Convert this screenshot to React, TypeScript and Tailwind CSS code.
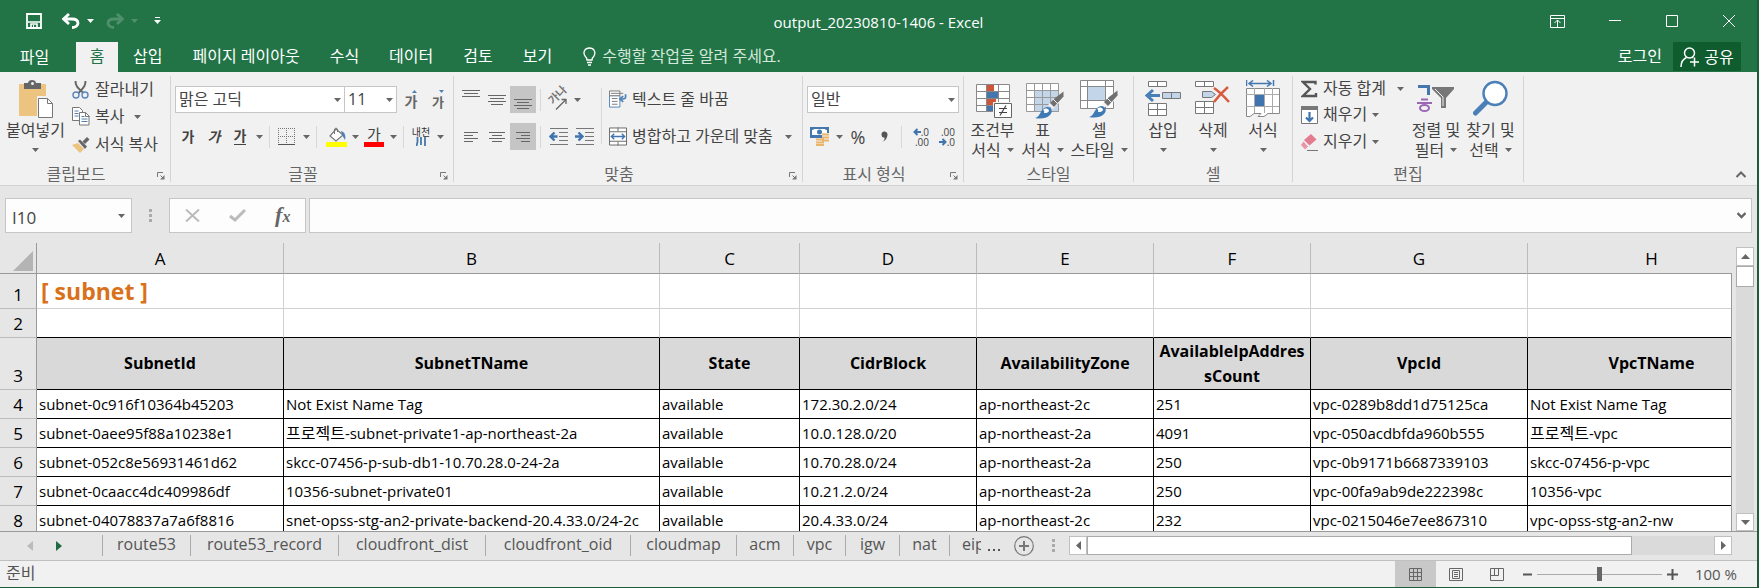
import type { ReactNode } from "react";

const Caret = ({ light = false }: { light?: boolean }) => (
  <svg width="7" height="4" viewBox="0 0 7 4" className={light ? "fill-white" : "fill-[#666]"}>
    <path d="M0 0h7L3.500 4z" />
  </svg>
);

const CaretButton = ({ label }: { label: string }) => (
  <button aria-label={label} className="flex h-full w-3 shrink-0 items-center justify-center">
    <Caret />
  </button>
);

const Tool = ({ label, active = false, children }: { label: string; active?: boolean; children: ReactNode }) => (
  <button
    aria-label={label}
    className={
      active
        ? "flex h-full w-[26px] shrink-0 items-center justify-center bg-[#c5c5c5]"
        : "flex h-full w-[26px] shrink-0 items-center justify-center"
    }
  >
    {children}
  </button>
);

const Sep = () => <div className="mx-1 h-[22px] w-px shrink-0 bg-[#d8d8d8]" />;

const ToolRow = ({ children }: { children: ReactNode }) => <div className="flex h-[27px] items-center">{children}</div>;

const Launcher = () => (
  <svg width="8" height="8" viewBox="0 0 8 8" fill="none" stroke="#777">
    <path d="M.5 5V.5H6M3.500 3.500l3 3" />
    <path d="M7.500 3v4.500H3z" fill="#777" stroke="none" />
  </svg>
);

const Group = ({
  label,
  launcher = false,
  className,
  children,
}: {
  label: string;
  launcher?: boolean;
  className: string;
  children: ReactNode;
}) => (
  <section aria-label={label} className={`mt-1 flex h-[106px] shrink-0 flex-col border-r border-[#d4d4d4] ${className}`}>
    <div className="flex min-h-0 flex-1">{children}</div>
    <div className="flex h-4 items-center leading-4 text-[#666]">
      <span className="flex-1 text-center">{label}</span>
      {launcher && (
        <button aria-label={`${label} 설정`} className="flex w-[18px] justify-center pt-1">
          <Launcher />
        </button>
      )}
    </div>
  </section>
);

const BigButton = ({
  icon,
  line1,
  line2,
  className,
}: {
  icon: ReactNode;
  line1: string;
  line2?: string;
  className: string;
}) => (
  <button className={`flex shrink-0 flex-col items-center pt-1 leading-5 whitespace-nowrap ${className}`}>
    <span className="flex h-10 items-start justify-center">{icon}</span>
    <span>{line1}</span>
    <span className="flex h-5 items-center gap-[6px]">
      {line2}
      <Caret />
    </span>
  </button>
);

const Lines = ({ rows }: { rows: [number, number, number][] }) => (
  <svg width="20" height="20" viewBox="0 0 20 20" stroke="#666">
    {rows.map(([x1, x2, y], i) => (
      <path key={i} d={`M${x1} ${y}.5H${x2}`} />
    ))}
  </svg>
);

const Combo = ({ label, value, className }: { label: string; value: string; className: string }) => (
  <div className={`relative h-[27px] shrink-0 ${className}`}>
    <select
      aria-label={label}
      defaultValue={value}
      className="h-full w-full appearance-none border border-[#c6c6c6] bg-white pb-[2px] pl-[3px] text-[#444]"
    >
      <option>{value}</option>
    </select>
    <span className="pointer-events-none absolute inset-y-0 right-1 flex items-center">
      <Caret />
    </span>
  </div>
);

const PasteIcon = () => (
  <svg width="36" height="40" viewBox="0 0 36 40">
    <rect x="1" y="4" width="27" height="32" rx="1" fill="#ecc47f" />
    <path d="M6 3h4c0-2 2-3 4-3s4 1 4 3h5v6H6z" fill="#666" />
    <circle cx="14.500" cy="3.500" r="1.500" fill="#f1f1f1" />
    <path d="M19 16h12l5 6v17H19z" fill="#f1f1f1" />
    <path d="M20.500 18.500h9l5 5v14h-14z" fill="#fff" stroke="#777" />
    <path d="M29.500 18.500v5h5" fill="none" stroke="#777" />
  </svg>
);

const CutIcon = () => (
  <svg width="18" height="18" viewBox="0 0 18 18" fill="none">
    <path d="M3.500 0c0 4 1 6 8 12M13.500 0c0 4-1 6-7 12" stroke="#666" strokeWidth="2" />
    <circle cx="4" cy="14" r="3" stroke="#5a86bd" strokeWidth="1.400" />
    <circle cx="13" cy="14" r="3" stroke="#5a86bd" strokeWidth="1.400" />
  </svg>
);

const CopyIcon = () => (
  <svg width="18" height="19" viewBox="0 0 18 19" fill="#fff" stroke="#777">
    <path d="M.5.5h7l3 3v10H.500z" />
    <path d="M2.500 4h4M2.500 6.500h4M2.500 9h4" stroke="#4f81b5" />
    <path d="M7.500 5.500h6l3.500 3.500v9H7.500z" />
    <path d="M13.500 5.500v4h4" fill="none" />
    <path d="M9.500 9.500h3M9.500 12h6M9.500 14.500h6" stroke="#4f81b5" />
  </svg>
);

const BrushIcon = () => (
  <svg width="18" height="16" viewBox="0 0 18 16">
    <path d="M0 8l6-2 6 6-4 4z" fill="#ecc47f" />
    <path d="M6 4l2-1.500 7 7L13 12z" fill="#666" />
    <path d="M10.500 4.500L15 0l2.500 2.500L13 7z" fill="#666" />
  </svg>
);

const GrowIcon = ({ up }: { up: boolean }) => (
  <span
    className={
      up
        ? "relative pt-1 pl-[2px] text-[14px] leading-4 font-bold text-[#666]"
        : "relative pt-1 pl-1 text-[13px] leading-4 font-bold text-[#666]"
    }
  >
    가
    <svg width="5" height="3" viewBox="0 0 5 3" fill="#4f81b5" className="absolute top-0 right-0">
      <path d={up ? "M0 3h5L2.500 0z" : "M0 0h5L2.500 3z"} />
    </svg>
  </span>
);

const BorderIcon = () => (
  <svg width="18" height="18" viewBox="0 0 18 18" fill="none" stroke="#777">
    <path d="M.5 0v16M8.500 0v16M16.500 0v16M0 .5h17M0 8.500h17" strokeDasharray="1 1" />
    <path d="M0 16.500h17" stroke="#555" />
  </svg>
);

const FillIcon = () => (
  <svg width="21" height="20" viewBox="0 0 21 20">
    <path d="M10 2l7 6-7 6-6-5z" fill="#fff" stroke="#777" strokeWidth="1.200" />
    <path d="M8.500 7V2q1.500-2 3 0v3" fill="none" stroke="#777" />
    <path d="M15 4c4 1 5 5 4 9l-3-5z" fill="#4f81b5" />
    <path d="M0 15h21v5H0z" fill="#ff0" />
  </svg>
);

const OrientationIcon = () => (
  <svg width="22" height="22" viewBox="0 0 22 22" className="overflow-visible">
    <text fontSize="11" fontWeight="bold" fill="#777" transform="translate(6 16) rotate(-45)">
      가나
    </text>
    <path d="M9 20.500L19 10.500M19 15v-4.500h-4.500" fill="none" stroke="#666" strokeWidth="1.300" />
  </svg>
);

const IndentIcon = ({ right }: { right: boolean }) => (
  <svg width="19" height="17" viewBox="0 0 19 17" fill="none" stroke="#777">
    <path d="M1 .5h18M10 4.500h9M10 8.500h9M10 12.500h9M1 16.500h18" />
    <path
      d={right ? "M0 8.500h7M3.500 4.500l4 4-4 4" : "M8.500 8.500H2M5.500 4.500l-4 4 4 4"}
      stroke="#3f74ae"
      strokeWidth="2.400"
    />
  </svg>
);

const WrapIcon = () => (
  <svg width="19" height="19" viewBox="0 0 19 19" fill="none" stroke="#4f81b5">
    <path d="M.5 5.500h11v12H.500z" fill="#fff" />
    <path d="M.5.500h11v5H.500z" fill="#fff" stroke="#777" />
    <path d="M2 3h13M3 8.500h6M3 11.500h6M3 14.500h6" stroke="#777" />
    <path d="M17.500 4v3q0 2-5 2M15 6l-3.500 3 3.500 3" strokeWidth="1.800" />
  </svg>
);

const MergeIcon = () => (
  <svg width="19" height="19" viewBox="0 0 19 19" fill="none" stroke="#666">
    <path d="M.5.500h18v18H.500zM0 4.500h19M0 14.500h19M9.500 0v4M9.500 15v4" fill="#fff" />
    <path d="M3 9.500h13M5.500 6.500l-3 3 3 3M13.500 6.500l3 3-3 3" stroke="#3f74ae" strokeWidth="1.500" />
  </svg>
);

const CurrencyIcon = () => (
  <svg width="20" height="19" viewBox="0 0 20 19">
    <path d="M0 0h19v11H0z" fill="#4477ad" />
    <path d="M2 3q2 0 2-1h11q0 1 2 1v5H2z" fill="#fff" />
    <circle cx="9.500" cy="5" r="2.500" fill="#4477ad" />
    <path d="M12 6h8v12h-8z" fill="#f1f1f1" />
    <path d="M6 11h8v8H6z" fill="#f1f1f1" />
    <path d="M12 7.500h7M12 10.500h7M12 13.500h7M6 12.500h8M6 15.500h8M6 18h8" stroke="#e9b56b" strokeWidth="2" />
  </svg>
);

const Arrow = ({ right }: { right: boolean }) => (
  <svg width="8" height="8" viewBox="0 0 8 8" fill="none" stroke="#3f74ae" strokeWidth="2">
    <path d={right ? "M0 4h6.500M3.500 1l3 3-3 3" : "M8 4H1.500M4.500 1l-3 3 3 3"} />
  </svg>
);

const DecimalIcon = ({ more }: { more: boolean }) => (
  <span className="flex w-5 flex-col text-[10px] leading-[10px] text-[#444]">
    <span className="flex items-center justify-end">
      {more && <Arrow right={false} />}
      {more ? ".0" : ".00"}
    </span>
    <span className="flex items-center justify-end">
      {!more && <Arrow right />}
      {more ? ".00" : ".0"}
    </span>
  </span>
);

const CondIcon = () => (
  <svg width="38" height="36" viewBox="0 0 38 36" className="mt-1 ml-1">
    <path d="M.5.500h33v27H.500z" fill="#fff" />
    <path d="M11 1h7v6h-7zM11 15h9v6h-9z" fill="#cf5538" />
    <path d="M11 8h11v6H11zM11 22h6v6h-6z" fill="#4477ad" />
    <path d="M.5.500h33v27H.500zM0 7.500h33M0 14.500h33M0 21.500h33M10.500 0v28M22.500 0v28" fill="none" stroke="#888" />
    <path d="M17 18h21v17H17z" fill="#f1f1f1" />
    <path d="M18.500 19.500h17v14h-17z" fill="#fff" stroke="#666" />
    <path d="M23 24.500h8M23 28.500h8M30 21.500l-6 10" stroke="#444" strokeWidth="1.200" />
  </svg>
);

const Brush = () => (
  <>
    <path d="M37 9v7L27 26l-5-4z" fill="#f1f1f1" />
    <path d="M37.500 8.500v5L28 24l-4-4 5-5z" fill="#707070" />
    <path d="M27 16l5 5" stroke="#f1f1f1" />
    <path d="M9 35c6-1 5-10 12-11 5 0 6 5 3 8-4 4-10 4-15 3z" fill="#3f7ab5" />
    <path d="M17 27c3-3 6-1 6 1-1 2-3 2-5 2 0-1 1-2-1-3z" fill="#fff" />
  </>
);

const TableStyleIcon = () => (
  <svg width="38" height="36" viewBox="0 0 38 36" className="mt-[3px] ml-1">
    <path d="M.5.500h32v28H.500z" fill="#fff" />
    <path d="M9 7h24v22H9z" fill="#c3d5e8" />
    <path
      d="M.5.500h32v28H.500zM0 7.500h33M0 14.500h33M0 21.500h33M8.500 0v28M16.500 0v28M24.500 0v28"
      fill="none"
      stroke="#999"
    />
    <Brush />
  </svg>
);

const CellStyleIcon = () => (
  <svg width="38" height="38" viewBox="0 0 38 38">
    <path d="M.5.500h33v28H.500zM0 6.500h33M0 20.500h33M7.500 0v28M25.500 0v28" fill="#fff" stroke="#888" />
    <path d="M8 7h17v13H8z" fill="#c3d5e8" />
    <g transform="translate(0 2)">
      <Brush />
    </g>
  </svg>
);

const InsertIcon = () => (
  <svg width="36" height="36" viewBox="0 0 36 36" fill="#fff" stroke="#777">
    <path d="M3.500 1.500h18v5h-18zM12.500 1.500v5M3.500 23.500h18v12h-18zM12.500 23.500v12M3.500 29.500h18" />
    <path d="M17.500 12.500h18v6h-18zM26.500 12.500v6" fill="#c3d5e8" />
    <path d="M15 15.500H2M8 10l-6 5.500L8 21" fill="none" stroke="#4a80b8" strokeWidth="3" />
  </svg>
);

const DeleteIcon = () => (
  <svg width="36" height="36" viewBox="0 0 36 36" fill="#fff" stroke="#777">
    <path d="M.5 1.500h18v5H.500zM9.500 1.500v5M.5 21.500h18v12H.500zM9.500 21.500v12M.5 27.500h18" />
    <path d="M7.500 11.500h9l4 3-4 3h-9z" fill="#c3d5e8" />
    <path d="M19 8q6 4 15 14M33 7Q26 13 19 22" fill="none" stroke="#d95b3e" strokeWidth="2.500" />
  </svg>
);

const FormatIcon = () => (
  <svg width="35" height="38" viewBox="0 0 35 38" fill="none">
    <path d="M.5 0v6M27.500 0v6M3 3.500h22M7 .500l-4 3 4 3M21 .500l4 3-4 3" stroke="#4477ad" strokeWidth="1.500" />
    <path d="M.5 8.500h33v25H22l-4 3h-6l3-3H8l-4 3H.500z" fill="#fff" stroke="#888" />
    <path d="M0 14.500h33M0 26.500h33M8.500 8v25M18.500 8v25M26.500 8v25" stroke="#aaa" />
    <path d="M9 15h9v11H9z" fill="#3f74ae" />
  </svg>
);

const SigmaIcon = () => (
  <svg width="17" height="18" viewBox="0 0 17 18" fill="none" stroke="#555" strokeWidth="2.400">
    <path d="M14.500 4.500V2H2l7 7-7 7h13v-3" />
  </svg>
);

const FillDownIcon = () => (
  <svg width="17" height="18" viewBox="0 0 17 18">
    <path d="M.5.500h16v17H.500z" fill="#fff" stroke="#777" />
    <path d="M0 0h17v4H0z" fill="#777" />
    <path d="M8.500 6v9M5 11.500l3.500 3.500 3.500-3.500" fill="none" stroke="#3f74ae" strokeWidth="2.200" />
  </svg>
);

const EraserIcon = () => (
  <svg width="17" height="17" viewBox="0 0 17 17">
    <path d="M10 0l5.500 5.500-7 6L3 6z" fill="#e37b91" />
    <path d="M2.500 7.500l4.500 5L4 15.500 0 11z" fill="#e896a8" />
    <path d="M6 16.500h11" stroke="#777" />
  </svg>
);

const SortIcon = () => (
  <svg width="38" height="30" viewBox="0 0 38 30" className="mt-1">
    <path d="M1 2.500h10.500V11" fill="none" stroke="#4477ad" strokeWidth="3" />
    <path d="M4 15.500h7M0 19h15" stroke="#9a66b5" strokeWidth="2" />
    <ellipse cx="7.500" cy="24" rx="4.500" ry="3" fill="none" stroke="#9a66b5" strokeWidth="2" />
    <path d="M15 3h22v2l-8 9v10h-5V14l-9-9z" fill="#777" />
    <path d="M18 5l8 8v9" fill="none" stroke="#f1f1f1" />
  </svg>
);

const FindIcon = () => (
  <svg width="36" height="36" viewBox="0 0 36 36">
    <path d="M2.500 33L14 21.500" stroke="#4a7fb8" strokeWidth="5" strokeLinecap="round" />
    <circle cx="22" cy="13.500" r="11.500" fill="#fff" stroke="#4a7fb8" strokeWidth="2.400" />
  </svg>
);

const MENU = ["삽입", "페이지 레이아웃", "수식", "데이터", "검토", "보기"];

const UndoPath = "M7 1L1.500 6 7 11M2 6h8q6 0 6 4.500-1 4-6 4";

const Header = () => (
  <header className="bg-[#227447] text-white">
    <div className="flex h-[42px] items-center">
      <div className="flex flex-1 items-center pl-[26px]">
        <button aria-label="저장">
          <svg width="16" height="16" viewBox="0 0 16 16" fill="none" stroke="#fff">
            <path d="M1 1h14v14H1z" strokeWidth="1.800" />
            <path d="M2 9h12M5 15v-4h6v4" strokeWidth="1.600" />
            <path d="M7.500 12v3" />
          </svg>
        </button>
        <button aria-label="실행 취소" className="ml-5">
          <svg width="18" height="16" viewBox="0 0 18 16" fill="none" stroke="#fff" strokeWidth="2.800">
            <path d={UndoPath} />
          </svg>
        </button>
        <button aria-label="실행 취소 목록" className="ml-[7px]">
          <Caret light />
        </button>
        <button aria-label="다시 실행" className="ml-3 opacity-20">
          <svg width="18" height="16" viewBox="0 0 18 16" fill="none" stroke="#fff" strokeWidth="2.800">
            <path d={UndoPath} transform="matrix(-1 0 0 1 18 0)" />
          </svg>
        </button>
        <button aria-label="다시 실행 목록" className="ml-[7px] opacity-20">
          <Caret light />
        </button>
        <button aria-label="빠른 실행 도구 모음 사용자 지정" className="ml-4">
          <svg width="7" height="8" viewBox="0 0 7 8" fill="#fff">
            <path d="M1 0h5v1H1zM0 3h7L3.500 7z" />
          </svg>
        </button>
      </div>
      <h1 className="pt-[2px] pr-[26px] text-[15px]">output_20230810-1406 - Excel</h1>
      <div className="flex flex-1 justify-end">
        <button aria-label="리본 메뉴 표시 옵션" className="flex h-10 w-[57px] items-center justify-center">
          <svg width="15" height="13" viewBox="0 0 15 13" fill="none" stroke="#fff">
            <path d="M.5.500h14v12H.500zM0 3.500h15M7.500 12V5M4.500 8l3-3 3 3" />
          </svg>
        </button>
        <button aria-label="최소화" className="flex h-10 w-[57px] items-center justify-center">
          <svg width="12" height="12" viewBox="0 0 12 12" stroke="#fff">
            <path d="M0 5.500h12" />
          </svg>
        </button>
        <button aria-label="최대화" className="flex h-10 w-[57px] items-center justify-center">
          <svg width="12" height="12" viewBox="0 0 12 12" fill="none" stroke="#fff">
            <path d="M.5.500h11v11H.500z" />
          </svg>
        </button>
        <button aria-label="닫기" className="flex h-10 w-[57px] items-center justify-center">
          <svg width="12" height="12" viewBox="0 0 12 12" stroke="#fff">
            <path d="M0 0l12 12M12 0L0 12" />
          </svg>
        </button>
      </div>
    </div>
    <nav className="flex h-[30px] items-stretch pr-4">
      <button className="w-[76px] pr-[7px]">파일</button>
      <button className="w-[42px] bg-[#f1f1f1] pb-[2px] text-[#227447]">홈</button>
      {MENU.map((m) => (
        <button key={m} className="px-[15px] pb-[2px] whitespace-nowrap">
          {m}
        </button>
      ))}
      <button className="flex items-center gap-[6px] pb-[2px] pl-4 whitespace-nowrap text-[#d3e8db]">
        <svg width="13" height="19" viewBox="0 0 13 19" fill="none" stroke="#fff" strokeWidth="1.300">
          <path d="M4 13q0-2-2-4C-.5 5 2 1 6.500 1S13 5 11 9q-2 2-2 4z" />
          <path d="M4 15.500h5M5 18h3" strokeWidth="1.600" />
        </svg>
        수행할 작업을 알려 주세요.
      </button>
      <div className="flex-1" />
      <button className="px-[11px] pb-[2px]">로그인</button>
      <button className="mb-px flex w-[68px] items-center justify-center gap-[5px] bg-[#0f5c2f]">
        <svg width="19" height="20" viewBox="0 0 19 20" fill="none" stroke="#fff" strokeWidth="1.500">
          <circle cx="9.500" cy="6" r="5" />
          <path d="M1 20q0-7 5.500-9.500M12 10l1 1M10 15h9M14.500 10.500v9" />
        </svg>
        공유
      </button>
    </nav>
  </header>
);

const SmallCommand = ({
  icon,
  label,
  caret,
  className,
}: {
  icon: ReactNode;
  label: string;
  caret?: string;
  className: string;
}) => (
  <div className={`flex items-center whitespace-nowrap ${className}`}>
    <button className="flex items-center gap-[5px]">
      <span className="flex w-[18px] justify-center">{icon}</span>
      <span className="pb-[2px]">{label}</span>
    </button>
    {caret && (
      <span className={`flex h-full ${caret}`}>
        <CaretButton label={`${label} 옵션`} />
      </span>
    )}
  </div>
);

const Ribbon = () => (
  <div className="flex h-[114px] border-b border-[#d2d2d2] bg-[#f1f1f1] text-[#444]">
    <Group label="클립보드" launcher className="w-[171px]">
      <BigButton icon={<PasteIcon />} line1="붙여넣기" className="w-[71px]" />
      <div className="pl-px">
        <SmallCommand icon={<CutIcon />} label="잘라내기" className="h-[27px]" />
        <SmallCommand icon={<CopyIcon />} label="복사" caret="pl-[7px]" className="h-[27px]" />
        <SmallCommand icon={<BrushIcon />} label="서식 복사" className="h-[29px]" />
      </div>
    </Group>

    <Group label="글꼴" launcher className="w-[283px]">
      <div className="flex flex-col gap-[10px] pt-[10px] pl-1">
        <ToolRow>
          <Combo label="글꼴" value="맑은 고딕" className="w-[170px]" />
          <Combo label="글꼴 크기" value="11" className="-ml-px w-[53px]" />
          <Tool label="글꼴 크기 크게">
            <GrowIcon up />
          </Tool>
          <Tool label="글꼴 크기 작게">
            <GrowIcon up={false} />
          </Tool>
        </ToolRow>
        <ToolRow>
          <Tool label="굵게">
            <span className="text-[14px] font-bold">가</span>
          </Tool>
          <Tool label="기울임꼴">
            <span className="text-[14px] font-bold italic">가</span>
          </Tool>
          <Tool label="밑줄">
            <span className="border-b border-[#444] text-[14px] leading-4 font-bold">가</span>
          </Tool>
          <CaretButton label="밑줄 종류" />
          <Sep />
          <Tool label="테두리">
            <BorderIcon />
          </Tool>
          <CaretButton label="테두리 종류" />
          <Sep />
          <div className="flex h-full pl-[2px]">
            <Tool label="채우기 색">
              <FillIcon />
            </Tool>
            <CaretButton label="채우기 색 선택" />
          </div>
          <Tool label="글꼴 색">
            <span className="border-b-[5px] border-[#f00] px-[3px] text-[15px] leading-4">가</span>
          </Tool>
          <CaretButton label="글꼴 색 선택" />
          <Sep />
          <Tool label="윗주">
            <span className="flex flex-col items-center text-[10px] leading-[10px] whitespace-nowrap text-[#333]">
              내천
              <svg width="10" height="9" viewBox="0 0 10 9" fill="none" stroke="#4477ad" strokeWidth="1.800">
                <path d="M1.500 0v5l-1 4M5 0v8M9 0v9" />
              </svg>
            </span>
          </Tool>
          <CaretButton label="윗주 옵션" />
        </ToolRow>
      </div>
    </Group>

    <Group label="맞춤" launcher className="w-[349px]">
      <div className="flex flex-col gap-[10px] pt-[10px] pl-1">
        <ToolRow>
          <Tool label="위쪽 맞춤">
            <Lines rows={[[1, 19, 0], [3, 17, 3], [1, 19, 6]]} />
          </Tool>
          <Tool label="가운데 맞춤(세로)">
            <Lines rows={[[1, 19, 5], [3, 17, 8], [1, 19, 11], [4, 16, 14]]} />
          </Tool>
          <Tool label="아래쪽 맞춤" active>
            <Lines rows={[[1, 19, 9], [4, 16, 12], [1, 19, 15], [4, 16, 18]]} />
          </Tool>
          <Sep />
          <Tool label="방향">
            <OrientationIcon />
          </Tool>
          <CaretButton label="방향 옵션" />
        </ToolRow>
        <ToolRow>
          <Tool label="왼쪽 맞춤">
            <Lines rows={[[3, 17, 5], [3, 12, 8], [3, 17, 11], [3, 12, 14]]} />
          </Tool>
          <Tool label="가운데 맞춤">
            <Lines rows={[[2, 18, 5], [5, 15, 8], [2, 18, 11], [5, 15, 14]]} />
          </Tool>
          <Tool label="오른쪽 맞춤" active>
            <Lines rows={[[3, 17, 5], [8, 17, 8], [3, 17, 11], [8, 17, 14]]} />
          </Tool>
          <Sep />
          <Tool label="내어쓰기">
            <IndentIcon right={false} />
          </Tool>
          <Tool label="들여쓰기">
            <IndentIcon right />
          </Tool>
        </ToolRow>
      </div>
      <div className="mx-1 mt-3 h-[56px] w-px bg-[#d8d8d8]" />
      <div className="flex flex-col gap-[10px] pt-[10px] pl-[3px]">
        <SmallCommand icon={<WrapIcon />} label="텍스트 줄 바꿈" className="h-[27px]" />
        <SmallCommand icon={<MergeIcon />} label="병합하고 가운데 맞춤" caret="pl-[10px]" className="h-[27px]" />
      </div>
    </Group>

    <Group label="표시 형식" launcher className="w-[161px]">
      <div className="flex flex-col gap-[10px] pt-[10px] pl-1">
        <Combo label="표시 형식" value="일반" className="w-[152px]" />
        <ToolRow>
          <Tool label="회계 표시 형식">
            <CurrencyIcon />
          </Tool>
          <CaretButton label="통화 선택" />
          <Tool label="백분율 스타일">
            <span className="text-[18px]">%</span>
          </Tool>
          <Tool label="쉼표 스타일">
            <svg width="7" height="11" viewBox="0 0 7 11" fill="#555">
              <path d="M1 11q3-2 2.500-4.500A3 3 0 1 1 6.500 3Q7 8 1 11z" />
            </svg>
          </Tool>
          <Sep />
          <Tool label="자릿수 늘림">
            <DecimalIcon more />
          </Tool>
          <Tool label="자릿수 줄임">
            <DecimalIcon more={false} />
          </Tool>
        </ToolRow>
      </div>
    </Group>

    <Group label="스타일" className="w-[170px]">
      <div className="flex pl-[2px]">
        <BigButton icon={<CondIcon />} line1="조건부" line2="서식" className="w-[53px]" />
        <BigButton icon={<TableStyleIcon />} line1="표" line2="서식" className="w-[47px]" />
        <BigButton icon={<CellStyleIcon />} line1="셀" line2="스타일" className="w-[66px]" />
      </div>
    </Group>

    <Group label="셀" className="w-[159px]">
      <div className="flex pl-1">
        <BigButton icon={<InsertIcon />} line1="삽입" className="w-[50px]" />
        <BigButton icon={<DeleteIcon />} line1="삭제" className="w-[50px]" />
        <BigButton icon={<FormatIcon />} line1="서식" className="w-[50px]" />
      </div>
    </Group>

    <Group label="편집" className="w-[231px]">
      <div className="w-[116px] pl-[7px]">
        <SmallCommand icon={<SigmaIcon />} label="자동 합계" caret="pl-2" className="h-[26px]" />
        <SmallCommand icon={<FillDownIcon />} label="채우기" caret="pl-[2px]" className="h-[26px]" />
        <SmallCommand icon={<EraserIcon />} label="지우기" caret="pl-[2px]" className="h-[28px]" />
      </div>
      <BigButton icon={<SortIcon />} line1="정렬 및" line2="필터" className="w-[54px]" />
      <BigButton icon={<FindIcon />} line1="찾기 및" line2="선택" className="w-[55px]" />
    </Group>

    <div className="flex flex-1 items-end justify-end pr-[11px] pb-[7px]">
      <button aria-label="리본 메뉴 축소">
        <svg width="10" height="7" viewBox="0 0 10 7" fill="none" stroke="#666" strokeWidth="2">
          <path d="M0.500 6L5 1.500 9.500 6" />
        </svg>
      </button>
    </div>
  </div>
);

const Dots = () => (
  <svg width="3" height="13" viewBox="0 0 3 13" fill="#aaa">
    <path d="M0 0h3v3H0zM0 5h3v3H0zM0 10h3v3H0z" />
  </svg>
);

const FormulaBar = () => (
  <div className="flex h-[57px] items-start pt-3 pr-[5px] pl-[5px]">
    <div className="relative h-[35px] w-[127px]">
      <input
        aria-label="이름 상자"
        defaultValue="I10"
        className="h-full w-full border border-[#c6c6c6] bg-[#fdfdfd] pt-[3px] pl-[6px] text-[17px] text-[#444]"
      />
      <span className="pointer-events-none absolute inset-y-0 right-[7px] flex items-center">
        <Caret />
      </span>
    </div>
    <div className="flex h-[35px] w-[37px] items-center justify-center">
      <Dots />
    </div>
    <div className="flex h-[35px] w-[137px] items-center justify-around border border-[#c6c6c6] bg-[#fdfdfd]">
      <button aria-label="취소">
        <svg width="15" height="13" viewBox="0 0 15 13" stroke="#bbb" strokeWidth="2">
          <path d="M1 .500l13 12M14 .500l-13 12" />
        </svg>
      </button>
      <button aria-label="입력">
        <svg width="17" height="13" viewBox="0 0 17 13" fill="none" stroke="#bbb" strokeWidth="3">
          <path d="M1 7l5 4L16 1" />
        </svg>
      </button>
      <button aria-label="함수 삽입" className="font-['Liberation_Serif',serif] text-[22px] font-bold text-[#666] italic">
        f<span className="text-[16px]">x</span>
      </button>
    </div>
    <div className="relative ml-[3px] h-[35px] flex-1">
      <input aria-label="수식 입력줄" className="h-full w-full border border-[#c6c6c6] bg-[#fdfdfd] px-2" />
      <button aria-label="수식 입력줄 확장" className="absolute inset-y-0 right-[6px]">
        <svg width="9" height="7" viewBox="0 0 9 7" fill="none" stroke="#666" strokeWidth="2.400">
          <path d="M.5 1l4 4 4-4" />
        </svg>
      </button>
    </div>
  </div>
);

const COLUMNS = ["A", "B", "C", "D", "E", "F", "G", "H"];

const FIELDS = [
  "SubnetId",
  "SubnetTName",
  "State",
  "CidrBlock",
  "AvailabilityZone",
  "AvailableIpAddressCount",
  "VpcId",
  "VpcTName",
];

const Project = () => <span className="text-[16px]">프로젝트</span>;

const ROWS: ReactNode[][] = [
  ["subnet-0c916f10364b45203", "Not Exist Name Tag", "available", "172.30.2.0/24", "ap-northeast-2c", "251", "vpc-0289b8dd1d75125ca", "Not Exist Name Tag"],
  ["subnet-0aee95f88a10238e1", <><Project />-subnet-private1-ap-northeast-2a</>, "available", "10.0.128.0/20", "ap-northeast-2a", "4091", "vpc-050acdbfda960b555", <><Project />-vpc</>],
  ["subnet-052c8e56931461d62", "skcc-07456-p-sub-db1-10.70.28.0-24-2a", "available", "10.70.28.0/24", "ap-northeast-2a", "250", "vpc-0b9171b6687339103", "skcc-07456-p-vpc"],
  ["subnet-0caacc4dc409986df", "10356-subnet-private01", "available", "10.21.2.0/24", "ap-northeast-2a", "250", "vpc-00fa9ab9de222398c", "10356-vpc"],
  ["subnet-04078837a7a6f8816", "snet-opss-stg-an2-private-backend-20.4.33.0/24-2c", "available", "20.4.33.0/24", "ap-northeast-2c", "232", "vpc-0215046e7ee867310", "vpc-opss-stg-an2-nw"],
];

const RowHead = ({ n }: { n: number }) => (
  <th
    scope="row"
    className="border-r border-b border-r-[#999] border-b-[#bbb] bg-[#e6e6e6] p-0 align-bottom text-[17px] leading-[27px] font-normal"
  >
    {n}
  </th>
);

const Sheet = () => (
  <div className="flex min-h-0 flex-1">
    <div className="min-w-0 flex-1 overflow-hidden">
      <table className="w-[1776px] table-fixed border-separate border-spacing-0 text-[15px] text-black">
        <colgroup>
          <col className="w-[37px]" />
          <col className="w-[247px]" />
          <col className="w-[376px]" />
          <col className="w-[140px]" />
          <col className="w-[177px]" />
          <col className="w-[177px]" />
          <col className="w-[157px]" />
          <col className="w-[217px]" />
          <col className="w-[248px]" />
        </colgroup>
        <thead>
          <tr className="h-[31px]">
            <td className="border-r border-b border-[#999] p-0 pr-[3px] pb-[2px] align-bottom">
              <svg width="20" height="20" viewBox="0 0 20 20" className="ml-auto">
                <path d="M20 0v20H0z" fill="#b4b4b4" />
              </svg>
            </td>
            {COLUMNS.map((c) => (
              <th
                key={c}
                scope="col"
                className="border-r border-b border-r-[#bbb] border-b-[#999] p-0 pt-[2px] text-[17px] leading-6 font-normal"
              >
                {c}
              </th>
            ))}
          </tr>
        </thead>
        <tbody className="bg-white">
          <tr className="h-[35px]">
            <RowHead n={1} />
            {COLUMNS.map((c) => (
              <td
                key={c}
                className="border-r border-b border-[#d0d0d0] p-0 pl-1 text-[23px] leading-8 font-bold text-[#d9711a]"
              >
                {c === "A" && "[ subnet ]"}
              </td>
            ))}
          </tr>
          <tr className="h-[29px]">
            <RowHead n={2} />
            {COLUMNS.map((c) => (
              <td key={c} className="border-r border-b border-r-[#d0d0d0] border-b-black p-0" />
            ))}
          </tr>
          <tr className="h-[52px]">
            <RowHead n={3} />
            {FIELDS.map((f) => (
              <td
                key={f}
                className="border-r border-b border-black bg-[#d9d9d9] px-[2px] py-0 text-center text-[16px] leading-[25px] font-bold break-all"
              >
                {f}
              </td>
            ))}
          </tr>
          {ROWS.map((row, i) => (
            <tr key={i} className="h-[29px]">
              <RowHead n={i + 4} />
              {row.map((cell, j) => (
                <td key={j} className="border-r border-b border-black p-0 pl-[2px] leading-[26px] whitespace-nowrap">
                  {cell}
                </td>
              ))}
            </tr>
          ))}
        </tbody>
      </table>
    </div>
    <div className="mt-[30px] w-px bg-[#999]" />
    <div className="mt-1 mr-[3px] ml-1 flex w-[18px] flex-col bg-[#dadada]">
      <button aria-label="위로 스크롤" className="flex h-[19px] items-center justify-center border border-[#c0c0c0] bg-white">
        <svg width="9" height="5" viewBox="0 0 9 5" fill="#666">
          <path d="M0 5h9L4.500 0z" />
        </svg>
      </button>
      <div className="h-[21px] border border-[#ababab] bg-white" />
      <div className="flex-1" />
      <button aria-label="아래로 스크롤" className="flex h-[18px] items-center justify-center border border-[#c0c0c0] bg-white">
        <svg width="9" height="5" viewBox="0 0 9 5" fill="#666">
          <path d="M0 0h9L4.500 5z" />
        </svg>
      </button>
    </div>
  </div>
);

const SHEETS = ["route53", "route53_record", "cloudfront_dist", "cloudfront_oid", "cloudmap", "acm", "vpc", "igw", "nat"];

const SheetTabs = () => (
  <div className="flex h-[30px] shrink-0 items-start border-t border-b border-t-[#999] border-b-[#c0c0c0] pr-[25px]">
    <div className="flex w-[102px] shrink-0 items-center gap-[23px] pt-[9px] pl-[27px]">
      <button aria-label="이전 시트">
        <svg width="6" height="10" viewBox="0 0 6 10" fill="#bbb">
          <path d="M6 0v10L0 5z" />
        </svg>
      </button>
      <button aria-label="다음 시트">
        <svg width="6" height="10" viewBox="0 0 6 10" fill="#1e6b41">
          <path d="M0 0v10l6-5z" />
        </svg>
      </button>
    </div>
    <div className="grid shrink-0 grid-cols-[88px_148px_147px_145px_106px_57px_52px_54px_50px_32px] pt-[3px] text-[16px] leading-[18px] text-[#555]">
      {SHEETS.map((s) => (
        <button key={s} className="border-l border-[#ababab] pb-[3px]">
          {s}
        </button>
      ))}
      <button className="overflow-hidden border-l border-[#ababab] pb-[3px] pl-3 text-left">eip</button>
    </div>
    <button aria-label="시트 더 보기" className="ml-[7px] flex h-[19px] items-end gap-[3px]">
      <span className="size-[2px] bg-[#555]" />
      <span className="size-[2px] bg-[#555]" />
      <span className="size-[2px] bg-[#555]" />
    </button>
    <button aria-label="새 시트" className="mt-1 ml-[14px]">
      <svg width="20" height="20" viewBox="0 0 20 20" fill="none" stroke="#777">
        <circle cx="10" cy="10" r="9.300" strokeWidth="1.200" />
        <path d="M10 5v10M5 10h10" strokeWidth="2" />
      </svg>
    </button>
    <div className="mt-[7px] ml-[18px]">
      <Dots />
    </div>
    <div className="mt-1 ml-[14px] flex h-[19px] flex-1 bg-[#dadada]">
      <button aria-label="왼쪽으로 스크롤" className="flex w-[18px] items-center justify-center border border-[#c0c0c0] bg-white">
        <svg width="5" height="9" viewBox="0 0 5 9" fill="#666">
          <path d="M5 0v9L0 4.500z" />
        </svg>
      </button>
      <div className="flex-1">
        <div className="h-full w-[87%] border border-[#ababab] bg-white" />
      </div>
      <button aria-label="오른쪽으로 스크롤" className="flex w-[18px] items-center justify-center border border-[#c0c0c0] bg-white">
        <svg width="5" height="9" viewBox="0 0 5 9" fill="#666">
          <path d="M0 0v9l5-4.500z" />
        </svg>
      </button>
    </div>
  </div>
);

const StatusBar = () => (
  <footer className="flex h-[26px] shrink-0 items-center bg-[#f1f1f1] pr-[20px] pl-[6px] text-[#555]">
    <span className="pb-[3px]">준비</span>
    <div className="flex-1" />
    <button aria-label="기본 보기" className="flex h-full w-[41px] items-center justify-center bg-[#c8c8c8]">
      <svg width="13" height="13" viewBox="0 0 13 13" fill="none" stroke="#666">
        <path d="M.5.500h12v12H.500zM0 4.500h13M0 8.500h13M4.500 0v13M8.500 0v13" />
      </svg>
    </button>
    <button aria-label="페이지 레이아웃 보기" className="flex h-full w-[41px] items-center justify-center">
      <svg width="14" height="13" viewBox="0 0 14 13" fill="none" stroke="#666">
        <path d="M.5.500h13v12H.500zM3.500 2.500h7v8h-7zM5 4.500h4M5 6.500h4M5 8.500h4" />
      </svg>
    </button>
    <button aria-label="페이지 나누기 미리 보기" className="flex h-full w-[41px] items-center justify-center">
      <svg width="14" height="13" viewBox="0 0 14 13" fill="none" stroke="#666">
        <path d="M.5.500h13v12H.500zM4.500 0v7M8.500 0v7.500H0" />
      </svg>
    </button>
    <button aria-label="축소" className="ml-[5px]">
      <svg width="9" height="11" viewBox="0 0 9 11" stroke="#555" strokeWidth="2">
        <path d="M0 5.500h9" />
      </svg>
    </button>
    <input
      type="range"
      aria-label="확대/축소"
      defaultValue="50"
      className="mx-[5px] h-[14px] w-[125px] appearance-none bg-[linear-gradient(#aaa,#aaa)] bg-[length:100%_1px] bg-center bg-no-repeat [&::-webkit-slider-thumb]:h-[14px] [&::-webkit-slider-thumb]:w-[5px] [&::-webkit-slider-thumb]:appearance-none [&::-webkit-slider-thumb]:bg-[#666]"
    />
    <button aria-label="확대">
      <svg width="11" height="11" viewBox="0 0 11 11" stroke="#555" strokeWidth="2">
        <path d="M0 5.500h11M5.500 0v11" />
      </svg>
    </button>
    <span className="ml-[17px] text-[15px]">100 %</span>
  </footer>
);

export default function App() {
  return (
    <div className="flex h-screen flex-col overflow-hidden border-r-2 border-b border-[#1d5c3a] bg-[#e6e6e6] font-['Open_Sans','Noto_Sans_CJK_KR',sans-serif] text-[16px] leading-6">
      <Header />
      <Ribbon />
      <FormulaBar />
      <Sheet />
      <SheetTabs />
      <StatusBar />
    </div>
  );
}
